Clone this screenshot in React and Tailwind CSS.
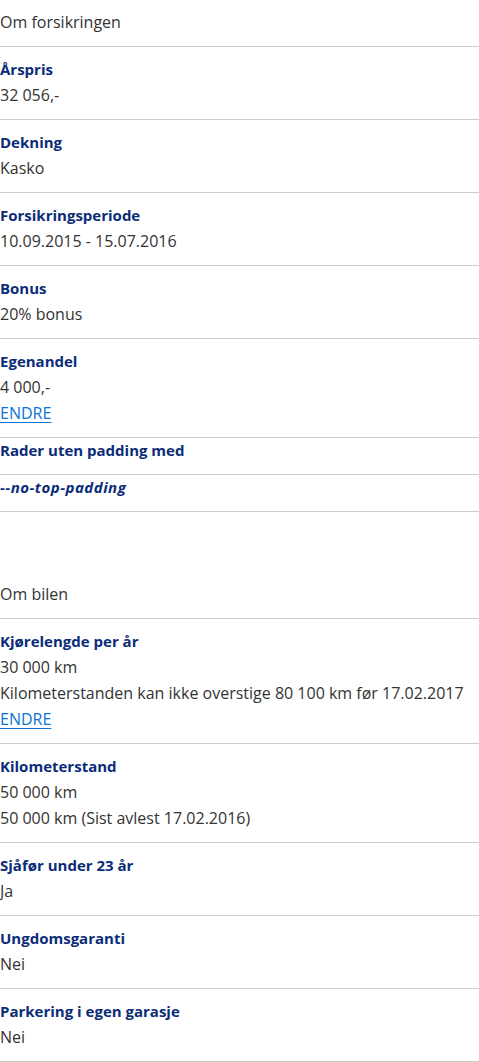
const font = { fontFamily: "'Open Sans', Lato, sans-serif" };

const insurance = [
  { label: "Årspris", lines: ["32 056,-"] },
  { label: "Dekning", lines: ["Kasko"] },
  { label: "Forsikringsperiode", lines: ["10.09.2015 - 15.07.2016"] },
  { label: "Bonus", lines: ["20% bonus"] },
  { label: "Egenandel", lines: ["4 000,-"], link: "ENDRE" },
];

const car = [
  {
    label: "Kjørelengde per år",
    lines: ["30 000 km", "Kilometerstanden kan ikke overstige 80 100 km før 17.02.2017"],
    link: "ENDRE",
  },
  { label: "Kilometerstand", lines: ["50 000 km", "50 000 km (Sist avlest 17.02.2016)"] },
  { label: "Sjåfør under 23 år", lines: ["Ja"] },
  { label: "Ungdomsgaranti", lines: ["Nei"] },
  { label: "Parkering i egen garasje", lines: ["Nei"] },
];

function Row({ label, lines = [], link, noTop, italic }) {
  return (
    <div
      className={`border-b border-[#cccccc] ${noTop ? "pt-0" : "pt-[9px]"} pb-[11px] text-[16px] leading-[26px]`}
    >
      <p
        className={`text-[15px] font-bold text-[#0b2c78] ${italic ? "italic tracking-[0.5px]" : ""} ${noTop ? "-mt-[1px]" : ""}`}
      >
        {label}
      </p>
      {lines.map((line) => (
        <p key={line} className="text-[#333333]">
          {line}
        </p>
      ))}
      {link && (
        <a href="#" className="text-[#0a73d4] underline underline-offset-[3px]">
          {link}
        </a>
      )}
    </div>
  );
}

function SectionTitle({ children }) {
  return (
    <div className="border-b border-[#cccccc] pt-[9px] pb-[11px] text-[16px] leading-[26px] text-[#333333]">
      {children}
    </div>
  );
}

export default function App() {
  return (
    <div className="min-h-screen bg-white" style={font}>
      <section>
        <SectionTitle>Om forsikringen</SectionTitle>
        {insurance.map((row) => (
          <Row key={row.label} {...row} />
        ))}
        <Row label="Rader uten padding med" noTop />
        <Row label="--no-top-padding" noTop italic />
      </section>

      <section className="mt-[60px]">
        <SectionTitle>Om bilen</SectionTitle>
        {car.map((row) => (
          <Row key={row.label} {...row} />
        ))}
      </section>
    </div>
  );
}
